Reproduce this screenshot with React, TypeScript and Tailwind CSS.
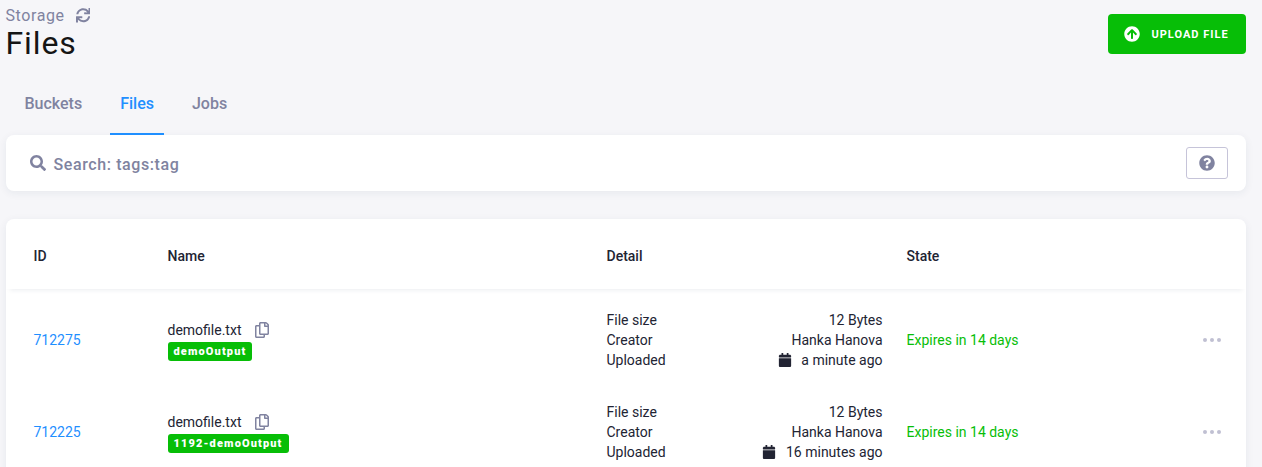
import {
  FaArrowCircleUp,
  FaCalendar,
  FaQuestionCircle,
  FaRegCopy,
  FaSearch,
  FaSync,
} from "react-icons/fa";

type StorageFile = { id: string; name: string; tag: string; size: string; creator: string; uploaded: string; state: string };

const files: StorageFile[] = [
  { id: "712275", name: "demofile.txt", tag: "demoOutput", size: "12 Bytes", creator: "Hanka Hanova", uploaded: "a minute ago", state: "Expires in 14 days" },
  { id: "712225", name: "demofile.txt", tag: "1192-demoOutput", size: "12 Bytes", creator: "Hanka Hanova", uploaded: "16 minutes ago", state: "Expires in 14 days" },
];

const columns = "grid grid-cols-[134px_439px_300px_1fr_20px] items-center pl-[27.5px] pr-6";

function Header() {
  return (
    <header className="flex h-[67px] items-start justify-between">
      <div>
        <div className="flex h-6 items-center pt-[7px] text-base leading-6 tracking-[0.6px] text-[#8083a0]">
          <span className="-ml-[0.5px]">Storage</span>
          <FaSync className="ml-[11px] size-[14.5px]" />
        </div>
        <h1 className="mt-[-1px] -ml-[0.5px] text-[32px] leading-10 font-normal tracking-[0.9px] text-[#151515]">Files</h1>
      </div>
      <button className="mt-3.5 flex h-10 w-[138px] items-center rounded-[4px] bg-[#07be07] pl-4 text-[11px] font-bold tracking-[1px] text-white">
        <FaArrowCircleUp className="mr-[11.5px] size-4" />
        <span className="pt-0.5">UPLOAD FILE</span>
      </button>
    </header>
  );
}

function Tabs() {
  return (
    <nav className="flex h-[68px] gap-[18px] pl-[8.5px] text-base font-medium text-[#8083a0]">
      <a className="px-2.5 pt-[25px]">Buckets</a>
      <a className="border-b-2 border-[#1f8fff] px-2.5 pt-[25px] text-[#1f8fff]">Files</a>
      <a className="px-2.5 pt-[25px]">Jobs</a>
    </nav>
  );
}

function FileRow({ file }: { file: StorageFile }) {
  return (
    <div className={`${columns} h-[92px] text-sm leading-5 text-[#222433]`}>
      <a className="pt-2.5 text-[#1f8fff]">{file.id}</a>
      <div className="pt-2.5">
        <div className="flex h-5 items-center">
          {file.name}
          <FaRegCopy className="ml-[13px] size-4 text-[#8083a0]" />
        </div>
        <span className="mt-0.5 flex h-[19px] w-fit items-center rounded-[3px] bg-[#07be07] px-1.5 pt-0.5 text-[11px] font-black tracking-[1.13px] text-white">
          {file.tag}
        </span>
      </div>
      <dl className="mr-6 grid grid-cols-[auto_auto] justify-between pt-2.5">
        <dt>File size</dt>
        <dd className="text-right">{file.size}</dd>
        <dt>Creator</dt>
        <dd className="text-right">{file.creator}</dd>
        <dt>Uploaded</dt>
        <dd className="flex items-center justify-end">
          <FaCalendar className="mr-[9.5px] size-[14px]" />
          {file.uploaded}
        </dd>
      </dl>
      <div className="pt-2.5 text-[#07be07]">{file.state}</div>
      <div className="flex gap-[3px] pt-2.5 pl-[0.5px]">
        <i className="size-[4.2px] shrink-0 rounded-full bg-[#c0c0d2]" />
        <i className="size-[4.2px] shrink-0 rounded-full bg-[#c0c0d2]" />
        <i className="size-[4.2px] shrink-0 rounded-full bg-[#c0c0d2]" />
      </div>
    </div>
  );
}

export default function App() {
  return (
    <main className="h-[467px] overflow-hidden bg-[#f6f6f9] pr-4 pl-1.5 font-['Roboto',sans-serif]">
      <Header />
      <Tabs />
      <section className="flex h-14 items-center rounded-lg bg-white pr-[18px] pl-6 shadow-[0_2px_8px_rgba(34,51,84,0.07)]">
        <FaSearch className="size-4 text-[#8083a0]" />
        <span className="ml-[7.5px] flex-1 pt-[3px] text-base leading-6 font-medium tracking-[0.6px] text-[#8083a0]">Search: tags:tag</span>
        <button className="flex h-8 w-[42px] items-center justify-center rounded-[3px] border border-[#c6c4d9] text-[#8083a0]">
          <FaQuestionCircle className="size-4" />
        </button>
      </section>
      <section className="mt-7 h-[300px] rounded-lg bg-white shadow-[0_2px_8px_rgba(34,51,84,0.07)]">
        <div className={`${columns} h-[70px] rounded-t-lg pt-1 text-sm leading-5 font-medium text-[#222433] shadow-[0_5px_5px_-4px_rgba(34,51,84,0.09)]`}>
          <span>ID</span>
          <span>Name</span>
          <span>Detail</span>
          <span>State</span>
        </div>
        {files.map((file) => (
          <FileRow key={file.id} file={file} />
        ))}
      </section>
    </main>
  );
}
